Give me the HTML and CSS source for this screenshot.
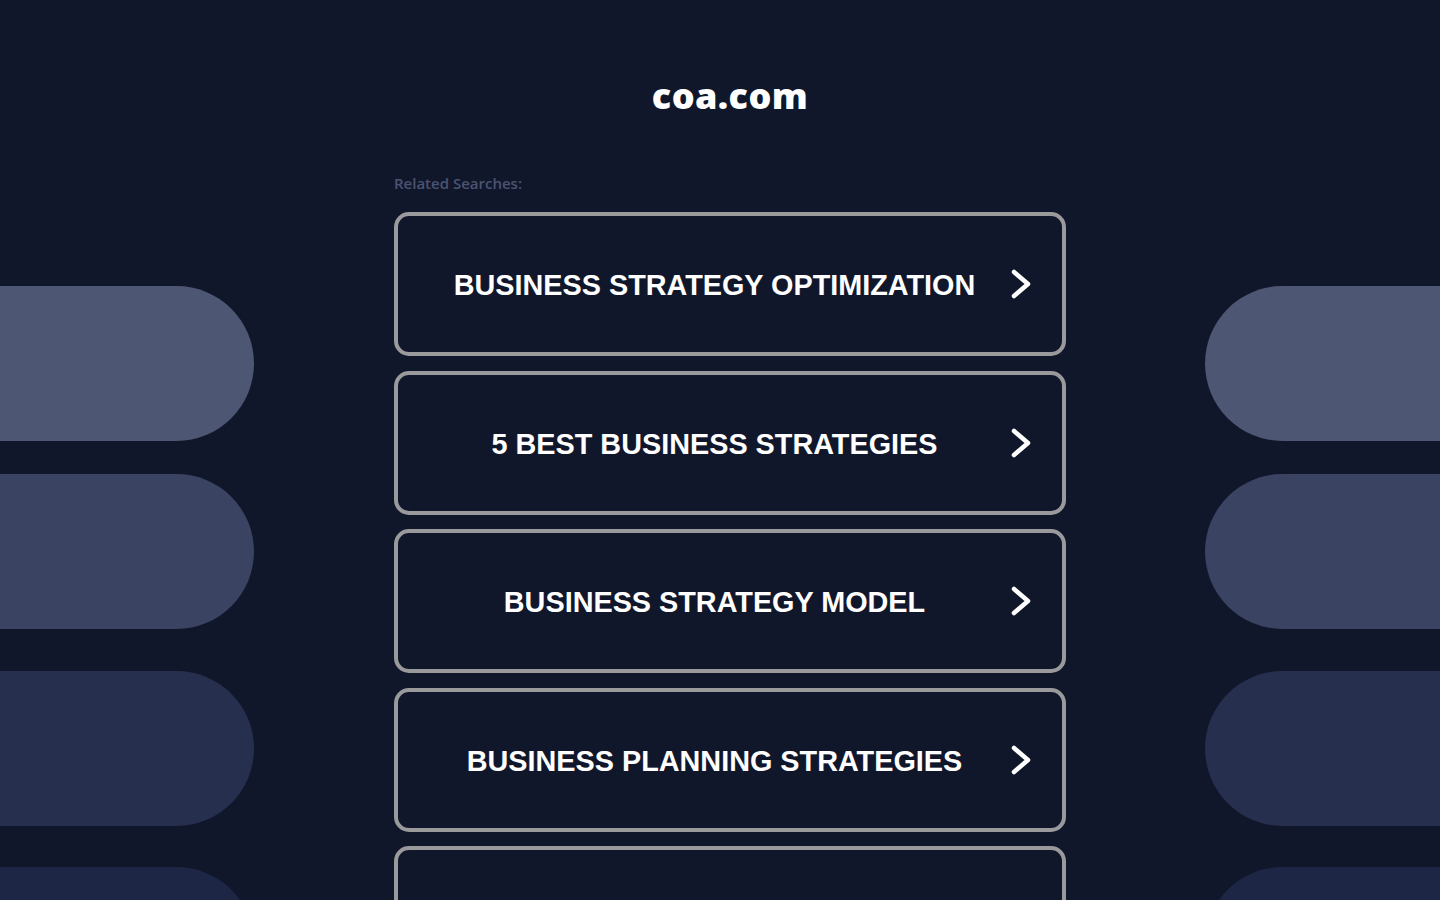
FILE: index.html
```html
<!DOCTYPE html>
<html lang="en">
<head>
<meta charset="utf-8">
<title>coa.com</title>
<link rel="stylesheet" href="styles.css">
</head>
<body>
<div class="deco deco-left" aria-hidden="true">
  <div class="pill p1"></div>
  <div class="pill p2"></div>
  <div class="pill p3"></div>
  <div class="pill p4"></div>
</div>
<div class="deco deco-right" aria-hidden="true">
  <div class="pill p1"></div>
  <div class="pill p2"></div>
  <div class="pill p3"></div>
  <div class="pill p4"></div>
</div>
<main class="page">
  <h1 class="domain">coa.com</h1>
  <section class="related">
    <p class="label">Related Searches:</p>
    <ul class="links">
      <li><a class="link" href="#"><span class="text">BUSINESS STRATEGY OPTIMIZATION</span><svg class="chev" viewBox="0 0 24 32"><path d="M5 4 L19 16 L5 28"/></svg></a></li>
      <li><a class="link" href="#"><span class="text">5 BEST BUSINESS STRATEGIES</span><svg class="chev" viewBox="0 0 24 32"><path d="M5 4 L19 16 L5 28"/></svg></a></li>
      <li><a class="link" href="#"><span class="text">BUSINESS STRATEGY MODEL</span><svg class="chev" viewBox="0 0 24 32"><path d="M5 4 L19 16 L5 28"/></svg></a></li>
      <li><a class="link" href="#"><span class="text">BUSINESS PLANNING STRATEGIES</span><svg class="chev" viewBox="0 0 24 32"><path d="M5 4 L19 16 L5 28"/></svg></a></li>
      <li><a class="link" href="#"><span class="text">BUSINESS STRATEGY CONSULTING</span><svg class="chev" viewBox="0 0 24 32"><path d="M5 4 L19 16 L5 28"/></svg></a></li>
    </ul>
  </section>
</main>
</body>
</html>
```
FILE: styles.css
```css
html, body {
  margin: 0;
  padding: 0;
  height: 100%;
  overflow: hidden;
  background: #11172b;
}
body {
  font-family: "Liberation Sans", Arial, sans-serif;
  color: #fff;
}
.deco {
  position: fixed;
  top: 286px;
  width: 254px;
  display: flex;
  flex-direction: column;
  z-index: 0;
}
.deco-left { left: 0; }
.deco-right { right: 0; width: 235px; }
.pill {
  height: 155px;
  flex: none;
}
.deco-left .pill { border-radius: 0 78px 78px 0; }
.deco-right .pill { border-radius: 78px 0 0 78px; }
.p1 { background: #4d5672; }
.p2 { background: #3a4361; margin-top: 33px; }
.p3 { background: #262f4d; margin-top: 42px; }
.p4 { background: #1d2645; margin-top: 41px; }

.page {
  position: relative;
  z-index: 1;
  box-sizing: border-box;
  width: 692px;
  margin: 0 auto;
  padding: 74px 0 0 20px;
}
.domain {
  margin: 0;
  text-align: center;
  font-family: "Open Sans", sans-serif;
  font-weight: 800;
  font-size: 36px;
  line-height: 44px;
  letter-spacing: 0.4px;
  color: #fff;
}
.related { margin-top: 56px; }
.label {
  margin: 0 0 19px 0;
  font-family: "Open Sans", sans-serif;
  font-size: 15px;
  line-height: 19px;
  color: #4a5371;
  font-weight: 600;
}
.links {
  list-style: none;
  margin: 0;
  padding: 0;
  display: flex;
  flex-direction: column;
  gap: 14.5px;
}
.link {
  box-sizing: border-box;
  height: 144px;
  display: flex;
  align-items: center;
  border: 4px solid #9a9a9c;
  border-radius: 15px;
  background: #11172b;
  text-decoration: none;
  color: #fff;
  padding: 0 29px 0 30px;
}
.text {
  flex: 1;
  text-align: center;
  font-weight: 700;
  font-size: 28.8px;
  line-height: 32px;
  padding-top: 2px;
}
.chev {
  flex: none;
  width: 24px;
  height: 32px;
  margin-left: 8px;
  fill: none;
  stroke: #fff;
  stroke-width: 4.5;
  stroke-linecap: round;
  stroke-linejoin: round;
}
```
